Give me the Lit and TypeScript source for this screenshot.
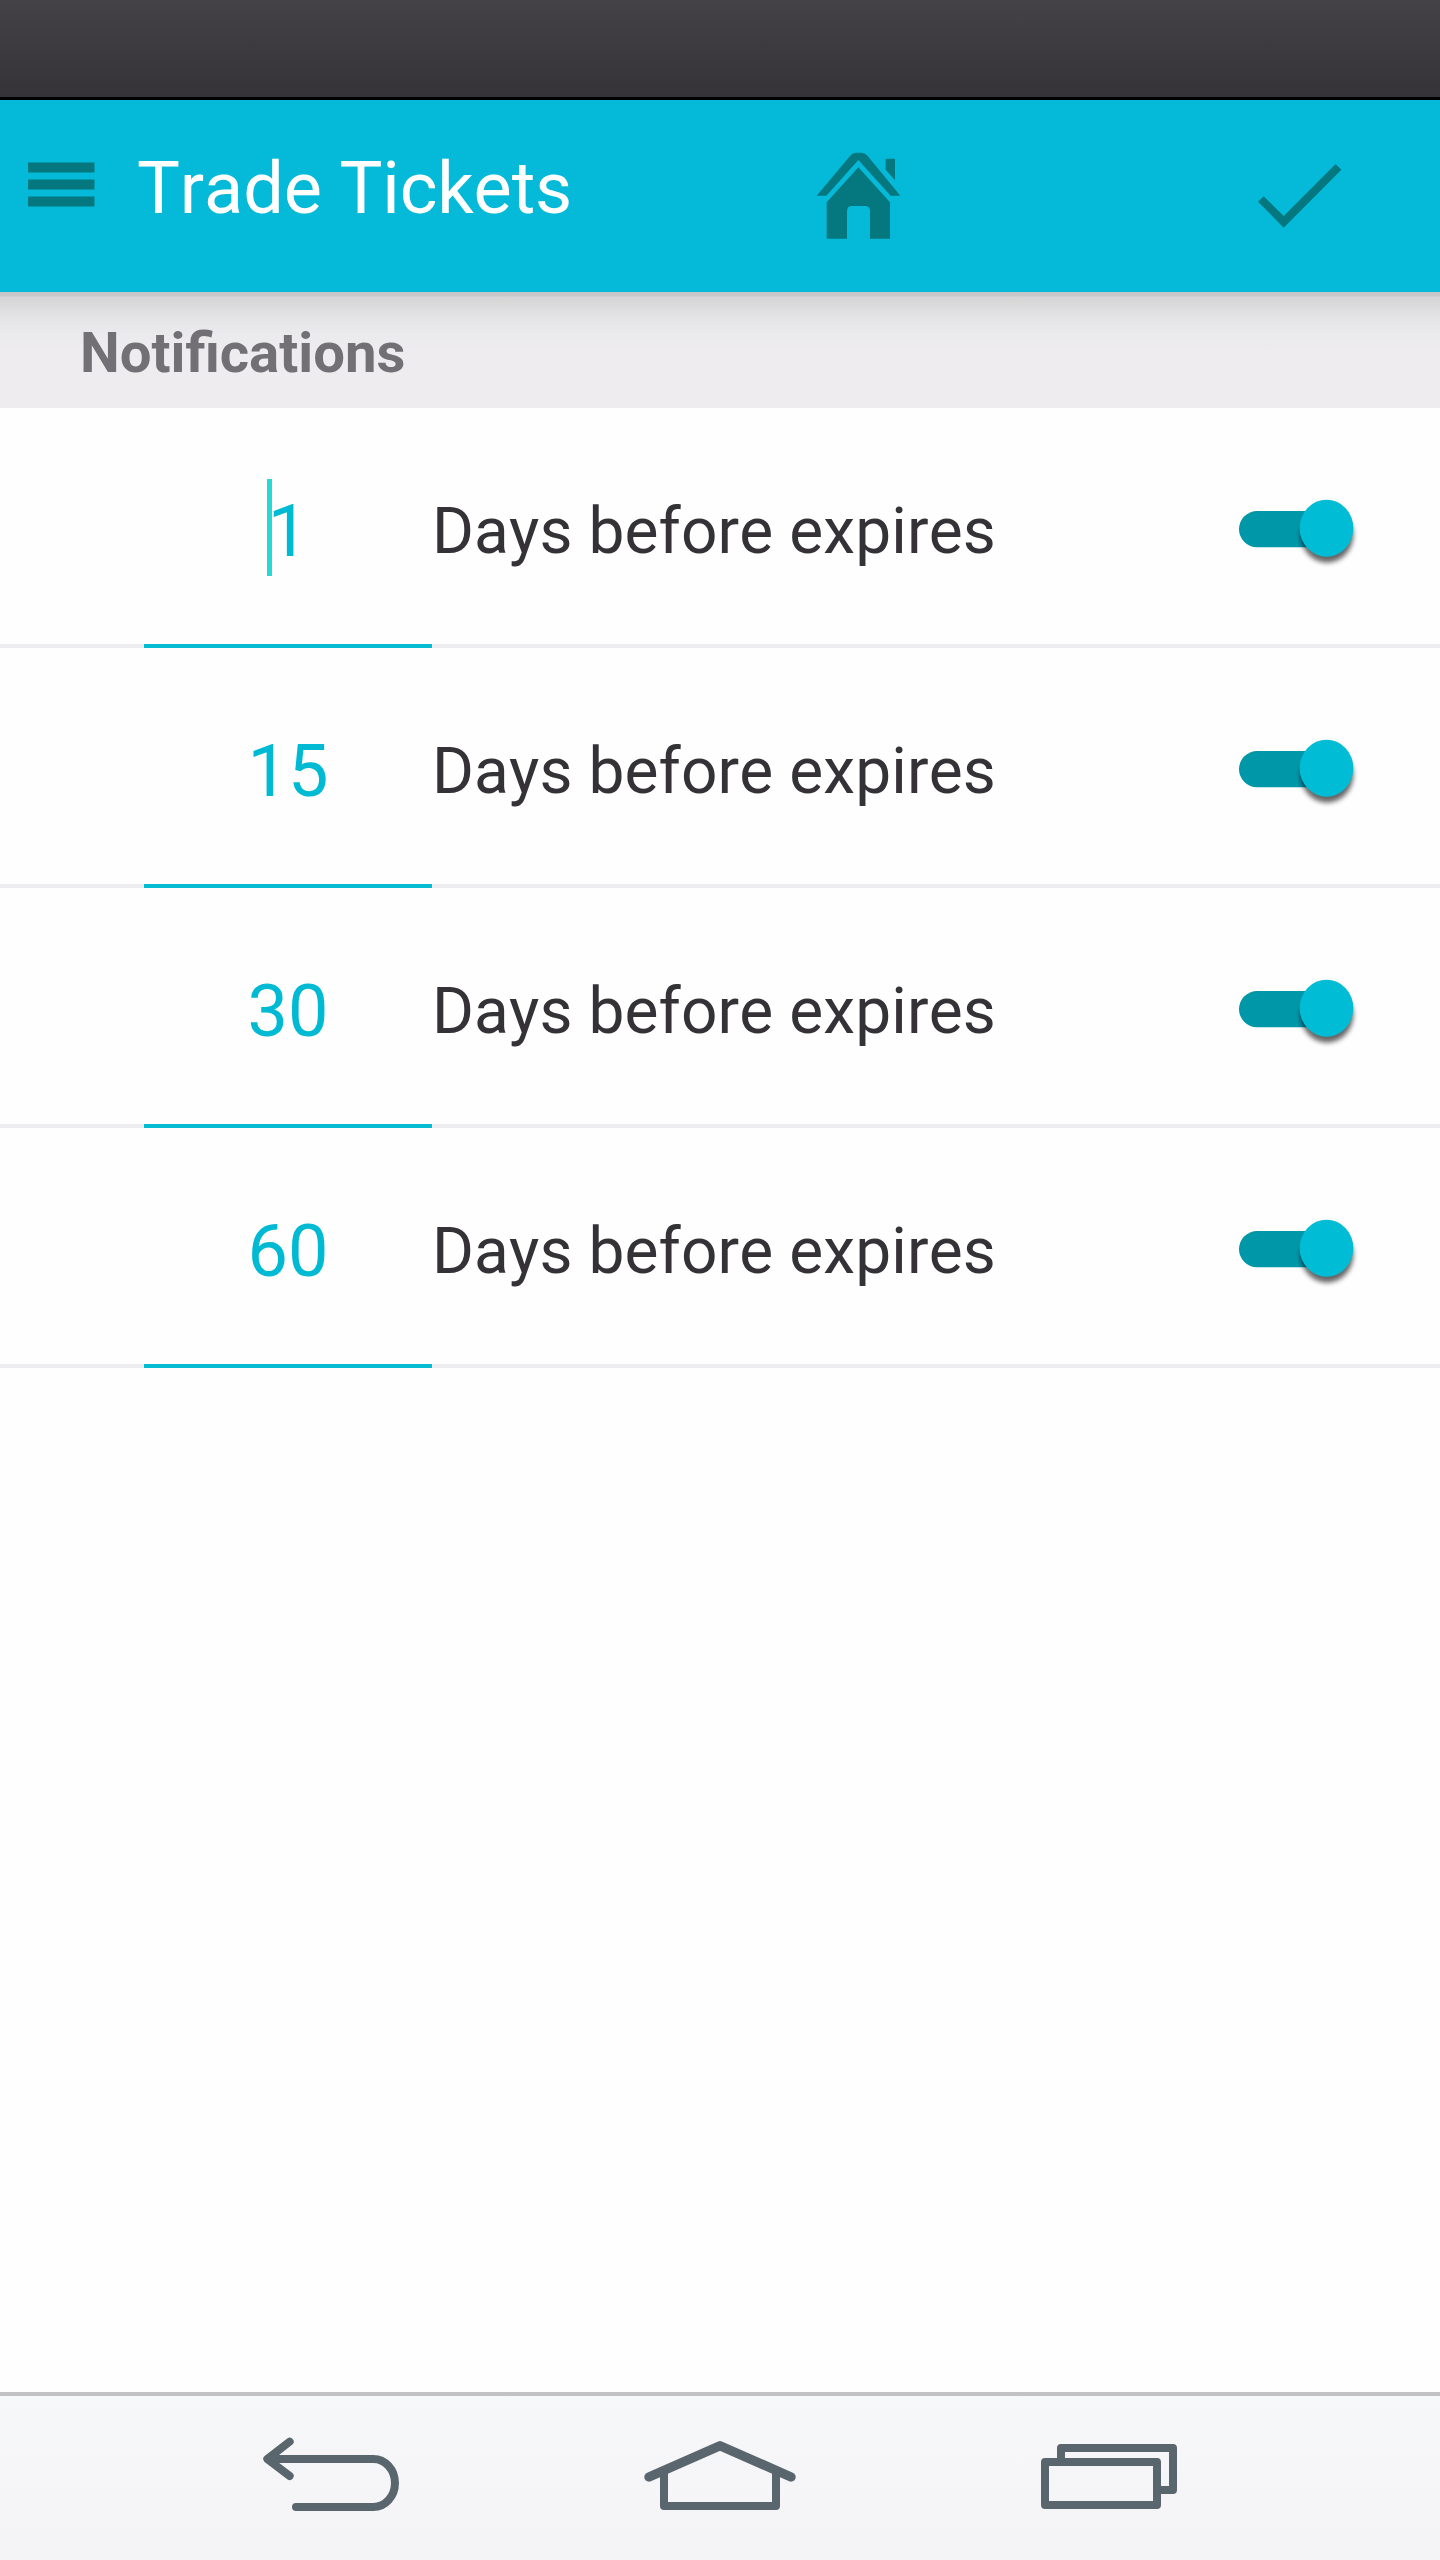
import { LitElement, html, css } from "lit";
import { customElement, property } from "lit/decorators.js";

@customElement("toggle-switch")
class ToggleSwitch extends LitElement {
  static styles = css`
    :host { display: block; width: 180px; height: 120px; }
    svg { display: block; overflow: visible; }
    .track { fill: #0097a9; }
    .shade { fill: #000; opacity: 0.6; filter: blur(8px); }
    .thumb { fill: #00bcd5; }
  `;
  render() {
    return html`
      <svg width="180" height="120" viewBox="0 0 540 360" role="img" aria-label="On">
        <rect class="track" x="117" y="123" width="260" height="109" rx="54.5" />
        <ellipse class="shade" cx="381" cy="195" rx="79" ry="83" />
        <ellipse class="thumb" cx="379.5" cy="174.5" rx="80.5" ry="85.5" />
      </svg>
    `;
  }
}

@customElement("expiry-row")
class ExpiryRow extends LitElement {
  @property({ type: Number }) days = 0;
  @property({ type: Boolean }) focused = false;

  static styles = css`
    :host { display: block; height: 240px; }
    .row {
      display: grid;
      grid-template-columns: 288px 768px 180px;
      box-sizing: border-box;
      height: 240px;
      padding-left: 144px;
      background: linear-gradient(#eeedf0, #eeedf0) bottom / 100% 4px no-repeat;
    }
    .field {
      position: relative;
      box-sizing: border-box;
      border-bottom: 4px solid #05bcd2;
      padding-top: 11px;
      text-align: center;
      font-size: 72px;
      line-height: 225px;
      color: #00bad3;
    }
    .caret {
      position: absolute;
      left: 123px;
      top: 71px;
      width: 5px;
      height: 97px;
      background: #26d9d3;
    }
    .label {
      padding-top: 11px;
      font-size: 64px;
      letter-spacing: 0.1px;
      line-height: 225px;
      color: #343236;
      white-space: nowrap;
    }
    toggle-switch { margin-top: 62px; }
  `;
  render() {
    return html`
      <div class="row">
        <div class="field">
          ${this.focused ? html`<span class="caret"></span>` : null}${this.days}
        </div>
        <div class="label">Days before expires</div>
        <toggle-switch></toggle-switch>
      </div>
    `;
  }
}

@customElement("app-root")
class AppRoot extends LitElement {
  private reminders = [1, 15, 30, 60];

  static styles = css`
    :host {
      display: flex;
      flex-direction: column;
      width: 1440px;
      height: 2560px;
      overflow: hidden;
      background: #fefefe;
      font-family: Roboto, sans-serif;
      font-kerning: none;
    }
    .status {
      box-sizing: border-box;
      height: 100px;
      border-bottom: 3px solid #020203;
      background: linear-gradient(#444246, #353337);
    }
    .header {
      display: grid;
      grid-template-columns: 137px 643px 160px 280px 160px;
      height: 192px;
      background: #05bad8;
    }
    .icon { display: block; fill: #04777f; }
    .menu { padding: 62px 0 0 28px; }
    .title {
      margin: 0;
      font-size: 72px;
      font-weight: 400;
      letter-spacing: -0.12px;
      line-height: 177px;
      color: #fff;
      white-space: nowrap;
    }
    .action { padding-top: 30px; }
    .check { grid-column: 5; }
    .section {
      box-sizing: border-box;
      height: 116px;
      margin: 0;
      padding: 6px 0 0 80px;
      font-size: 56.3px;
      font-weight: 700;
      line-height: 110px;
      color: #727074;
      background: linear-gradient(#c6c4c8 0, #c9c8cb 4px, #d5d5d7 5px, #d9d9da 12px, #dfdee1 19px, #e6e5e8 30px, #ebeaed 44px, #eeecef 62px, #eeecef 100%);
    }
    .body { flex: 1; }
    .nav {
      display: flex;
      gap: 200px;
      height: 164px;
      padding-left: 240px;
      border-top: 4px solid #c2c2c4;
      background: linear-gradient(#f7f8fa, #f4f3f6);
    }
    .glyph {
      display: block;
      fill: none;
      stroke: #5a666e;
      stroke-width: 24;
      stroke-linecap: round;
      stroke-linejoin: round;
    }
  `;
  render() {
    return html`
      <div class="status"></div>
      <header class="header">
        <div class="menu">
          <svg class="icon" width="67" height="46" viewBox="0 0 67 46">
            <path d="M0 .5h66.5v10H0zM0 17.5h66.5v10H0zM0 34.5h66.5v10H0z" />
          </svg>
        </div>
        <h1 class="title">Trade Tickets</h1>
        <div class="action">
          <svg class="icon" width="160" height="130" viewBox="0 0 480 390">
            <path d="M110 197L212 76Q219 68 228 68H245Q254 68 261 76L361 197H332L235 90L139 197Z" />
            <path d="M317 86H345V151L317 119Z" />
            <path d="M235 112L330 217V326H270V244Q270 228 255 228H216Q201 228 201 244V326H140V217Z" />
          </svg>
        </div>
        <div class="action check">
          <svg class="icon" width="160" height="130" viewBox="0 0 480 390">
            <path d="M114 215L131 199L191 258L347 102L364 119L191 293Z" />
          </svg>
        </div>
      </header>
      <h2 class="section">Notifications</h2>
      <main class="body">
        ${this.reminders.map((d, i) => html`<expiry-row .days=${d} .focused=${i === 0}></expiry-row>`)}
      </main>
      <nav class="nav">
        <svg class="glyph" width="180" height="164" viewBox="0 48 540 492">
          <path d="M149 185L82 237L149 288M90 237H400A65 72 0 0 1 400 381H168" />
        </svg>
        <svg class="glyph" width="200" height="164" viewBox="0 48 600 492">
          <path stroke-width="28" d="M87 291L300 197L513 291" />
          <path d="M132 276V378H468V276" />
        </svg>
        <svg class="glyph" width="180" height="164" viewBox="0 48 540 492">
          <path d="M75 246H411V375H75ZM123 240V204H459V330H417" />
        </svg>
      </nav>
    `;
  }
}
